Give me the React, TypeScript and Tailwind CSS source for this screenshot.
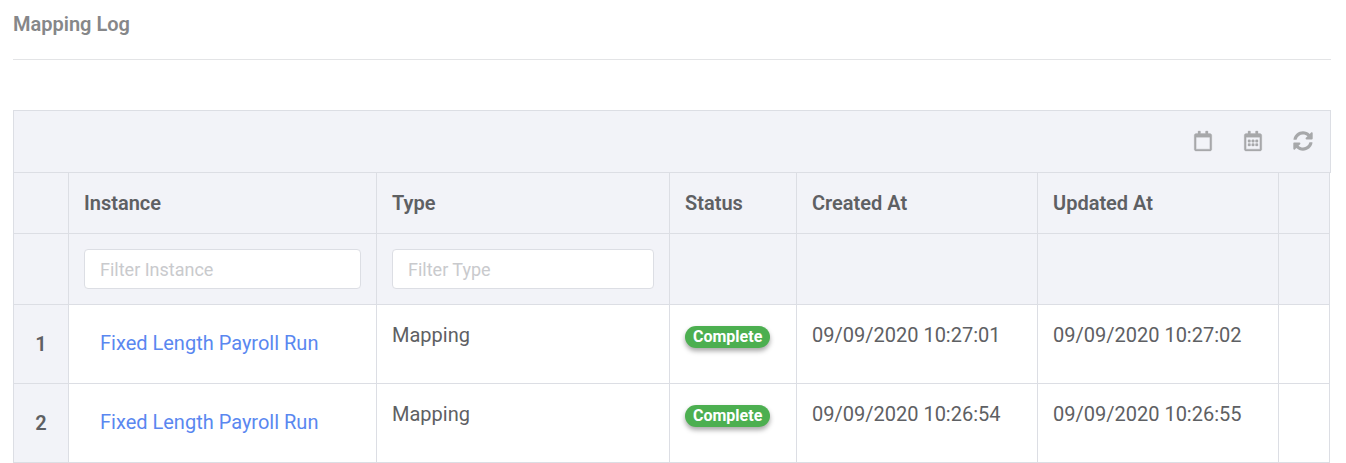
import { useState } from "react";
import { FaRegCalendar, FaRegCalendarAlt, FaSyncAlt } from "react-icons/fa";

type LogEntry = {
  id: number;
  instance: string;
  type: string;
  status: string;
  createdAt: string;
  updatedAt: string;
};

const entries: LogEntry[] = [
  {
    id: 1,
    instance: "Fixed Length Payroll Run",
    type: "Mapping",
    status: "Complete",
    createdAt: "09/09/2020 10:27:01",
    updatedAt: "09/09/2020 10:27:02",
  },
  {
    id: 2,
    instance: "Fixed Length Payroll Run",
    type: "Mapping",
    status: "Complete",
    createdAt: "09/09/2020 10:26:54",
    updatedAt: "09/09/2020 10:26:55",
  },
];

const headCell = "border-r border-b border-[#dcdee4] bg-[#f2f3f8] p-[15px] text-left font-semibold";
const bodyCell = "border-r border-b border-[#dcdee4] p-[15px] align-top";
const filterInput =
  "block h-10 w-full rounded border border-[#dcdee4] bg-white px-[15px] text-[18px] font-normal placeholder-[#c9cacd] outline-none";
const toolButton = "flex w-5 justify-center";
const calendarIcon = "overflow-visible stroke-current stroke-[8]";

// Toolbar
const Toolbar = () => {
  return (
    <div className="flex justify-end gap-[30px] border border-[#dcdee4] bg-[#f2f3f8] px-[17px] pt-5 pb-[21px] text-[20px] text-[#a7a8aa]">
      <button type="button" aria-label="Day" className={toolButton}>
        <FaRegCalendar className={calendarIcon} />
      </button>
      <button type="button" aria-label="Month" className={toolButton}>
        <FaRegCalendarAlt className={calendarIcon} />
      </button>
      <button type="button" aria-label="Refresh" className={toolButton}>
        <FaSyncAlt />
      </button>
    </div>
  );
};

const App = () => {
  // Filter State
  const [instance, setInstance] = useState<string>("");
  const [type, setType] = useState<string>("");

  // Filter Log Entries
  const rows = entries.filter(
    (row) =>
      row.instance.toLowerCase().includes(instance.toLowerCase()) &&
      row.type.toLowerCase().includes(type.toLowerCase())
  );

  return (
    <main className="pt-[9px] pr-[15px] pl-[13px] font-[Roboto,sans-serif] text-[20px] leading-[30px] text-[#5e6063]">
      <h1 className="border-b border-[#e3e4e6] pb-5 text-[20px] font-semibold text-[#868789]">
        Mapping Log
      </h1>

      <section className="mt-[50px]">
        <Toolbar />
        <div className="pr-px">
          <table className="w-full table-fixed border-separate border-spacing-0 border-l border-[#dcdee4]">
            <colgroup>
              <col className="w-[55px]" />
              <col />
              <col className="w-[293px]" />
              <col className="w-[127px]" />
              <col className="w-[241px]" />
              <col className="w-[241px]" />
              <col className="w-[51px]" />
            </colgroup>
            <thead>
              {/* column titles */}
              <tr>
                <td className={headCell}></td>
                <th className={headCell}>Instance</th>
                <th className={headCell}>Type</th>
                <th className={headCell}>Status</th>
                <th className={headCell}>Created At</th>
                <th className={headCell}>Updated At</th>
                <td className={headCell}></td>
              </tr>
              {/* filters */}
              <tr>
                <td className={headCell}></td>
                <td className={headCell}>
                  <input
                    type="text"
                    aria-label="Filter Instance"
                    placeholder="Filter Instance"
                    value={instance}
                    onChange={(e) => setInstance(e.target.value)}
                    className={filterInput}
                  />
                </td>
                <td className={headCell}>
                  <input
                    type="text"
                    aria-label="Filter Type"
                    placeholder="Filter Type"
                    value={type}
                    onChange={(e) => setType(e.target.value)}
                    className={filterInput}
                  />
                </td>
                <td className={headCell}></td>
                <td className={headCell}></td>
                <td className={headCell}></td>
                <td className={headCell}></td>
              </tr>
            </thead>
            <tbody>
              {rows.map((row) => {
                return (
                  <tr key={row.id}>
                    <th className="border-r border-b border-[#dcdee4] bg-[#f2f3f8] text-center font-semibold">
                      {row.id}
                    </th>
                    <td className={bodyCell}>
                      <a href="#" className="block px-4 pt-2 pb-[10px] text-[#5a87f0]">
                        {row.instance}
                      </a>
                    </td>
                    <td className={bodyCell}>{row.type}</td>
                    <td className={bodyCell}>
                      <div className="flex pt-[6px]">
                        <span className="rounded-full bg-[#4caf50] px-2 text-[16px] leading-[22px] font-bold text-white shadow-[0_3px_5px_rgba(0,0,0,0.35)]">
                          {row.status}
                        </span>
                      </div>
                    </td>
                    <td className={bodyCell}>{row.createdAt}</td>
                    <td className={bodyCell}>{row.updatedAt}</td>
                    <td className={bodyCell}></td>
                  </tr>
                );
              })}
            </tbody>
          </table>
        </div>
      </section>
    </main>
  );
};

export default App;
